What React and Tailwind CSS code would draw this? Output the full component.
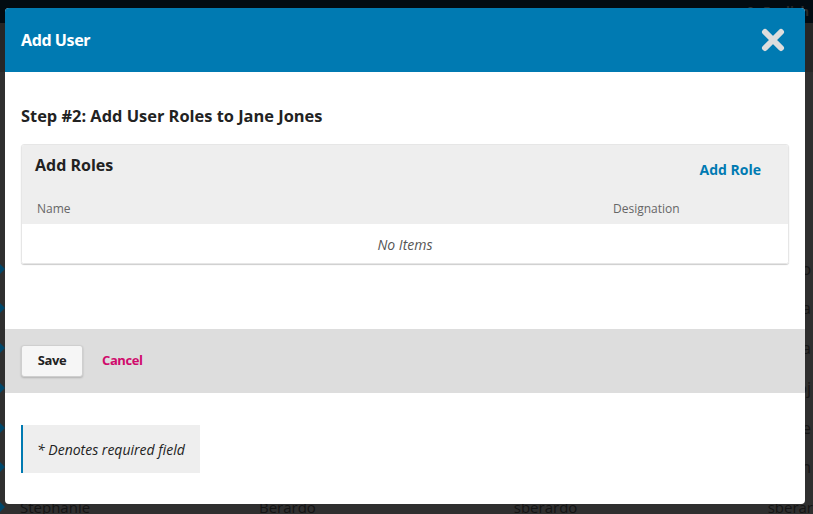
import React from 'react';

const bgRows = [
  { y: 'top-[262px]', tail: 'o' },
  { y: 'top-[301px]', tail: 'na' },
  { y: 'top-[341px]', tail: 'sa' },
  { y: 'top-[381px]', tail: 'oj' },
  { y: 'top-[421px]', tail: 've' },
  { y: 'top-[460px]', tail: 'n' },
];

const CloseIcon = () => (
  <svg width="24" height="24" viewBox="0 0 24 24" aria-hidden="true">
    <path d="M4 4 L20 20 M20 4 L4 20" stroke="#dddddd" strokeWidth="6" strokeLinecap="round" />
  </svg>
);

const Backdrop = () => (
  <div className="absolute inset-0 bg-[#2f2f2f] overflow-hidden">
    <div className="h-[23px] bg-[#020b12] flex justify-end items-center pr-[4px] gap-2">
      <span className="text-[12px] text-[#333] font-bold">⚲</span>
      <span className="text-[13px] text-[#2a2a2a] font-bold">English</span>
    </div>
    <div className="h-[49px] bg-[#262626]" />
    {bgRows.map((r) => (
      <div key={r.tail} className={`absolute left-0 right-0 ${r.y} h-[14px] flex items-center justify-between`}>
        <span className="w-0 h-0 border-y-[5px] border-y-transparent border-l-[5px] border-l-[#00476a]" />
        <span className="text-[16px] text-[#161616] pr-[2px]">{r.tail}</span>
      </div>
    ))}
    <div className="absolute left-0 right-0 top-[500px] flex items-center text-[15px] leading-[14px] text-[#141414]">
      <span className="w-0 h-0 border-y-[5px] border-y-transparent border-l-[5px] border-l-[#00476a] mr-[15px]" />
      <span className="w-[241px]">Stephanie</span>
      <span className="w-[257px]">Berardo</span>
      <span className="w-[256px]">sberardo</span>
      <span>sberar</span>
    </div>
  </div>
);

export default function App() {
  return (
    <div className="relative w-[813px] h-[514px] overflow-hidden font-['Open_Sans','Noto_Sans',sans-serif]">
      <Backdrop />

      <div className="absolute left-[5px] top-[8px] w-[800px] h-[496px] bg-white rounded-[4px] overflow-hidden flex flex-col">
        <div className="h-[64px] bg-[#007ab2] flex items-center justify-between pl-[16px] pr-[20px] shrink-0">
          <h2 className="text-[16px] font-bold text-white tracking-[-0.4px] font-['Noto_Sans',sans-serif]">Add User</h2>
          <CloseIcon />
        </div>

        <div className="px-[16px] pt-[33px]">
          <h3 className="text-[16.4px] font-bold text-[#222] leading-[22px]">Step #2: Add User Roles to Jane Jones</h3>

          <div className="mt-[17px] rounded-[3px] shadow-[0_1px_1px_rgba(0,0,0,0.2)] border border-[#e6e6e6] overflow-hidden">
            <div className="bg-[#eeeeee] h-[79px] flex flex-col">
              <div className="flex justify-between pl-[13px] pr-[27px] pt-[9px]">
                <span className="text-[16px] font-bold text-[#222] leading-[22px]">Add Roles</span>
                <span className="text-[14px] font-bold text-[#007ab2] leading-[22px] mt-[5px]">Add Role</span>
              </div>
              <div className="flex mt-[20px] text-[12px] text-[#666] leading-[16px]">
                <span className="pl-[15px] w-[591px]">Name</span>
                <span>Designation</span>
              </div>
            </div>
            <div className="h-[39px] flex items-center justify-center bg-white pt-[2px]">
              <span className="text-[14px] italic text-[#555]">No Items</span>
            </div>
          </div>
        </div>

        <div className="mt-[65px] h-[64px] bg-[#dddddd] flex items-center px-[16px] gap-[19px]">
          <button className="w-[62px] h-[32px] bg-[#f6f6f6] border border-[#cfcfcf] rounded-[3px] shadow-[0_1px_2px_rgba(0,0,0,0.2)] text-[13px] font-bold text-[#222] tracking-[-0.4px]">
            Save
          </button>
          <span className="text-[13px] font-bold text-[#d00a6c] tracking-[-0.4px]">Cancel</span>
        </div>

        <div className="px-[16px] pt-[32px]">
          <div className="w-[179px] h-[48px] bg-[#eeeeee] border-l-2 border-[#007ab2] flex items-center pl-[14px]">
            <span className="text-[14px] italic text-[#222]">* Denotes required field</span>
          </div>
        </div>
      </div>
    </div>
  );
}
